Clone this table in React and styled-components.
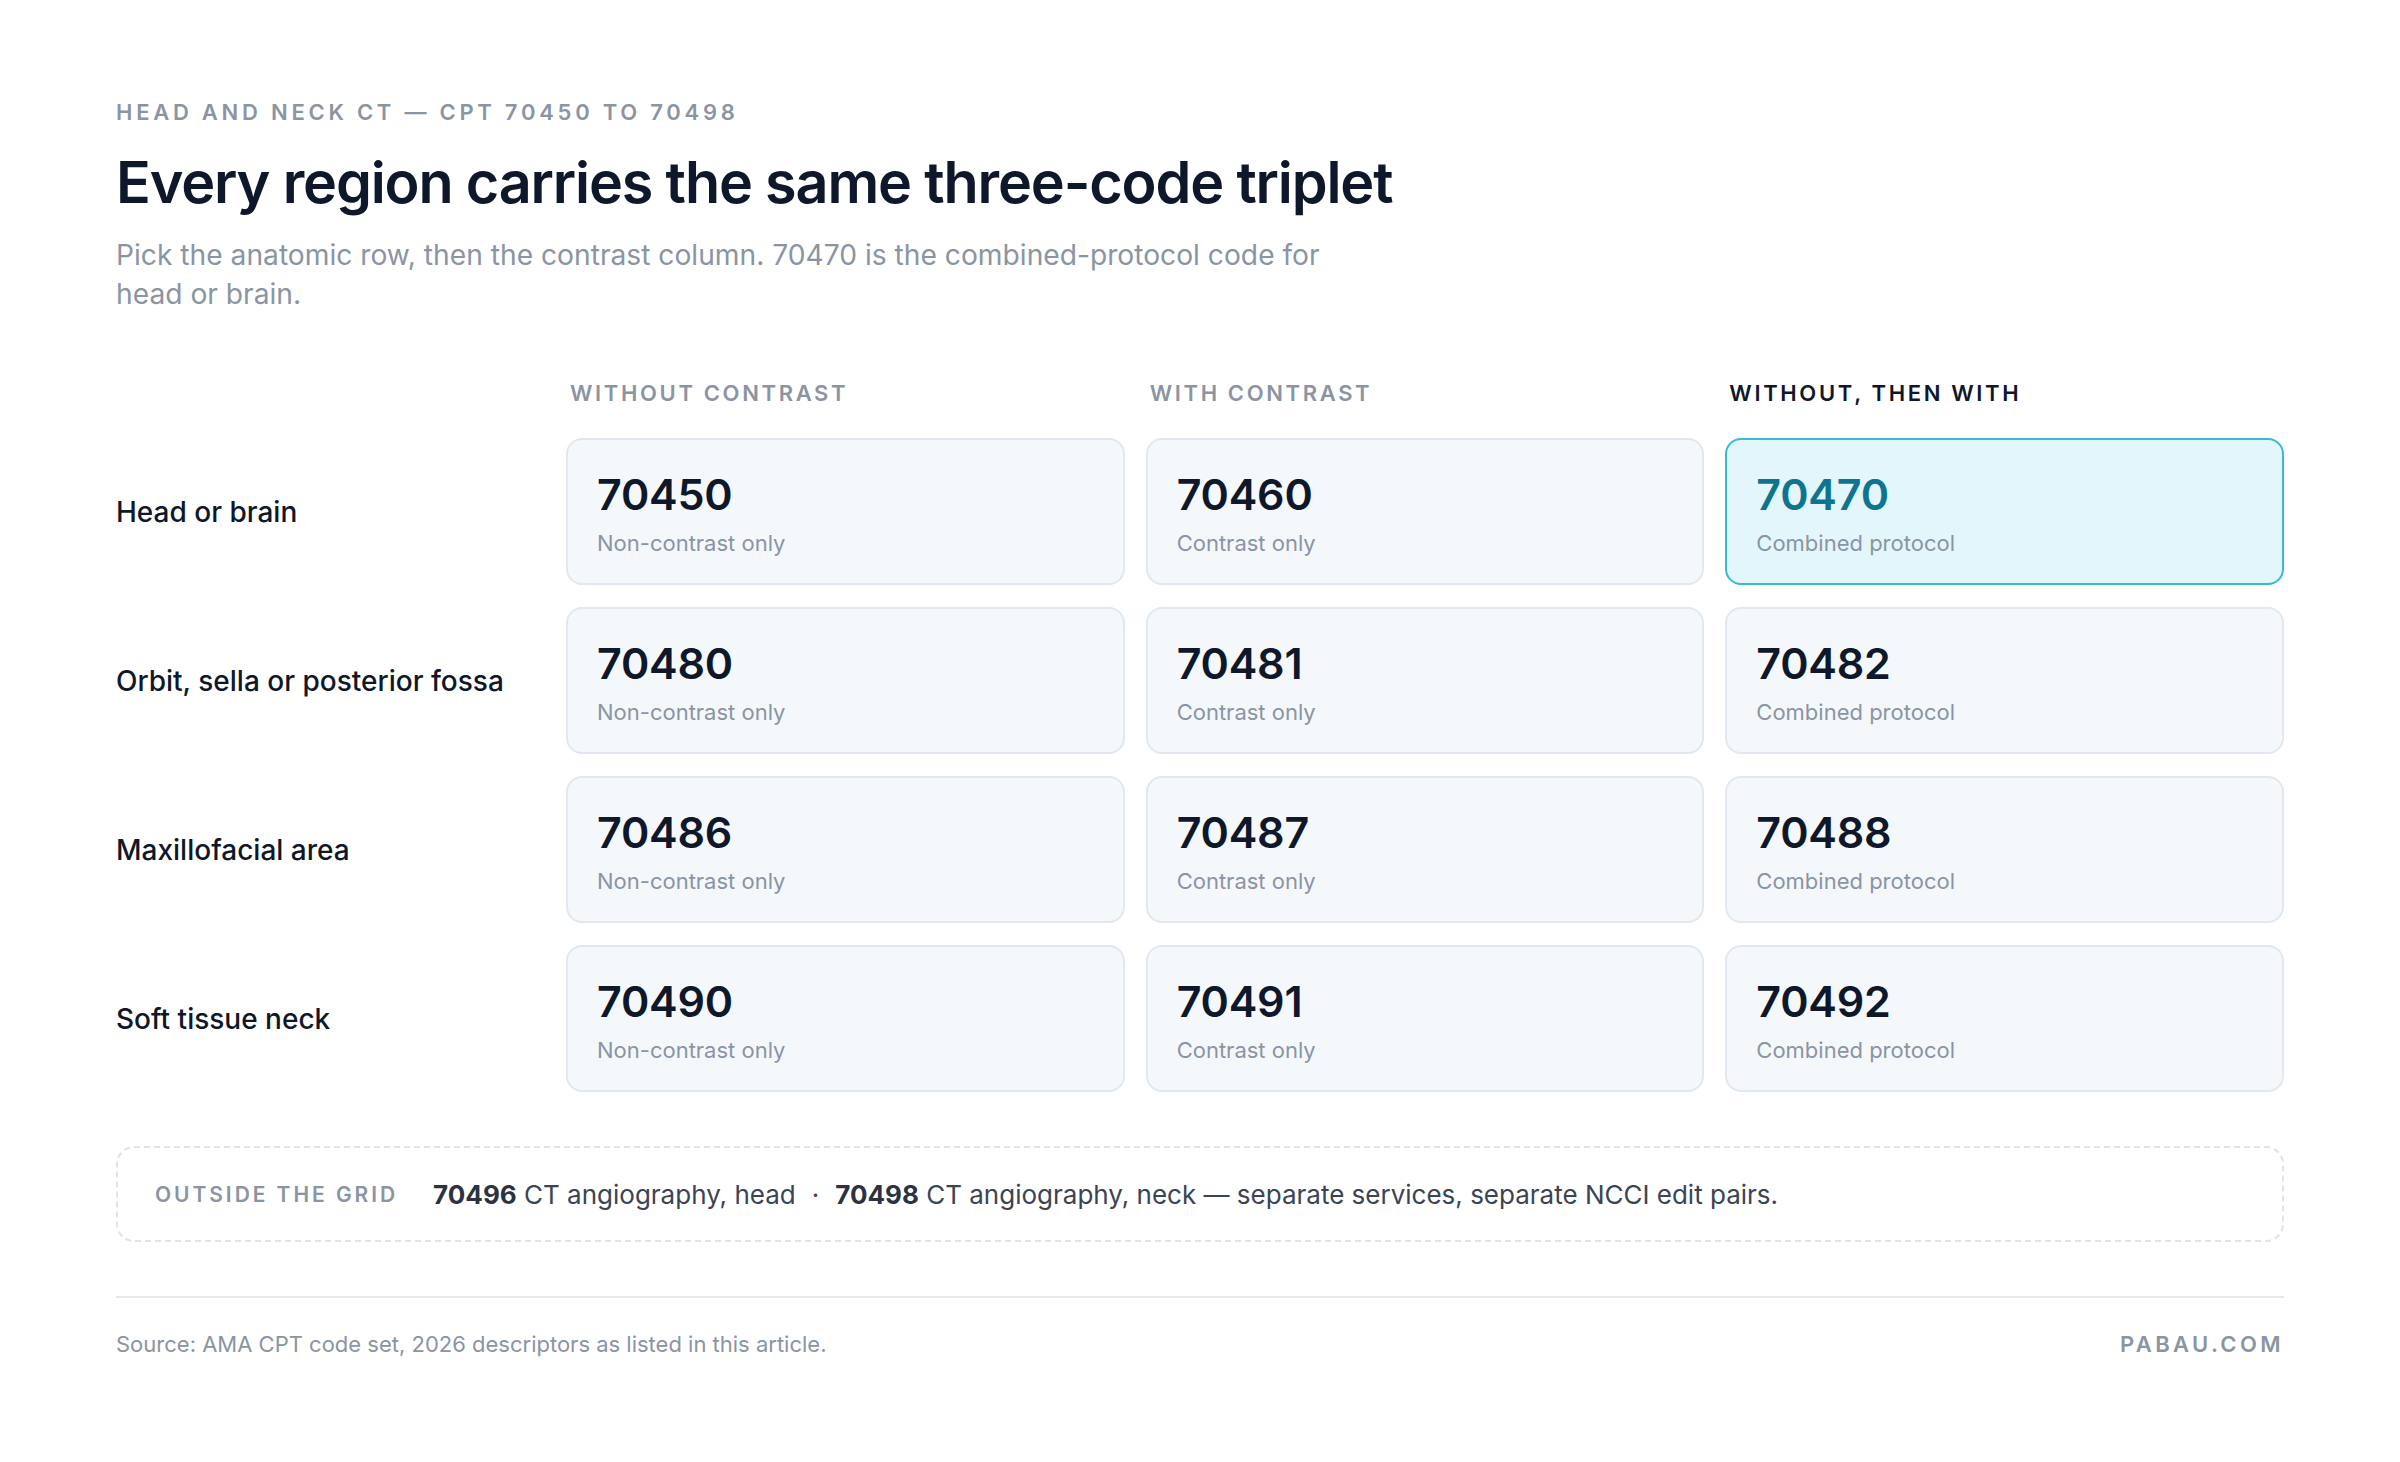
import React from 'react';
import styled, { createGlobalStyle } from 'styled-components';

const GlobalStyle = createGlobalStyle`
  html, body {
    margin: 0;
    padding: 0;
    background: #ffffff;
  }
  body {
    font-family: Inter, "Noto Sans", sans-serif;
    color: #0f172a;
  }
`;

const Page = styled.main`
  width: 2400px;
  min-height: 1462px;
  box-sizing: border-box;
  padding: 99px 116px 60px;
`;

const Eyebrow = styled.div`
  font-size: 22px;
  line-height: 26px;
  font-weight: 600;
  letter-spacing: 0.17em;
  color: #8b94a3;
  text-transform: uppercase;
`;

const Title = styled.h1`
  margin: 24px 0 0;
  font-size: 57.5px;
  line-height: 66px;
  font-weight: 600;
  letter-spacing: -0.02em;
  color: #0f172a;
`;

const Lead = styled.p`
  margin: 21px 0 0;
  max-width: 1250px;
  font-size: 28.2px;
  line-height: 39px;
  font-weight: 400;
  color: #8b94a3;
`;

const Grid = styled.section`
  margin-top: 66px;
  display: grid;
  grid-template-columns: 429px repeat(3, 1fr);
  column-gap: 21px;
  row-gap: 22px;
`;

const ColHead = styled.div`
  padding-left: 4px;
  margin-bottom: 10px;
  font-size: 22px;
  line-height: 26px;
  font-weight: 600;
  letter-spacing: 0.12em;
  text-transform: uppercase;
  color: ${({ $active }) => ($active ? '#0f172a' : '#8b94a3')};
`;

const RowLabel = styled.div`
  display: flex;
  align-items: center;
  font-size: 28px;
  font-weight: 500;
  color: #0f172a;
`;

const Card = styled.div`
  box-sizing: border-box;
  height: 147px;
  padding: 28px 29px 0;
  border-radius: 16px;
  border: 2px solid ${({ $active }) => ($active ? '#3bb9d1' : '#e2e8f0')};
  background: ${({ $active }) => ($active ? '#e3f6fb' : '#f4f8fb')};
`;

const Code = styled.div`
  font-size: 43px;
  line-height: 52px;
  font-weight: 600;
  letter-spacing: -0.005em;
  color: ${({ $active }) => ($active ? '#0e7490' : '#0f172a')};
`;

const Desc = styled.div`
  margin-top: 8px;
  font-size: 22px;
  line-height: 30px;
  color: #8b94a3;
`;

const Aside = styled.div`
  margin-top: 54px;
  height: 96px;
  box-sizing: border-box;
  display: flex;
  align-items: center;
  padding: 0 37px;
  border: 2px dashed #dfe4ea;
  border-radius: 18px;
  font-size: 26px;
  color: #3b4454;
`;

const AsideTag = styled.span`
  margin-right: 35px;
  font-size: 21px;
  font-weight: 600;
  letter-spacing: 0.14em;
  text-transform: uppercase;
  color: #8b94a3;
`;

const Strong = styled.b`
  font-weight: 700;
  color: #2b3242;
`;

const Dot = styled.span`
  margin: 0 16px;
  color: #3b4454;
`;

const Rule = styled.hr`
  margin: 54px 0 0;
  border: 0;
  border-top: 2px solid #e6e8ee;
`;

const Footer = styled.footer`
  margin-top: 33px;
  display: flex;
  justify-content: space-between;
  align-items: center;
`;

const Source = styled.span`
  font-size: 22px;
  color: #8b94a3;
`;

const Brand = styled.span`
  font-size: 22px;
  font-weight: 600;
  letter-spacing: 0.155em;
  color: #8b94a3;
`;

const columns = ['Without contrast', 'With contrast', 'Without, then with'];
const descs = ['Non-contrast only', 'Contrast only', 'Combined protocol'];

const rows = [
  { label: 'Head or brain', codes: ['70450', '70460', '70470'] },
  { label: 'Orbit, sella or posterior fossa', codes: ['70480', '70481', '70482'] },
  { label: 'Maxillofacial area', codes: ['70486', '70487', '70488'] },
  { label: 'Soft tissue neck', codes: ['70490', '70491', '70492'] },
];

const App = () => {
  return (
    <Page>
      <GlobalStyle />
      <Eyebrow>Head and neck CT — CPT 70450 to 70498</Eyebrow>
      <Title>Every region carries the same three-code triplet</Title>
      <Lead>
        Pick the anatomic row, then the contrast column. 70470 is the combined-protocol code for
        head or brain.
      </Lead>

      <Grid>
        <div />
        {columns.map((c, i) => (
          <ColHead key={c} $active={i === 2}>{c}</ColHead>
        ))}
        {rows.map((row, r) => (
          <React.Fragment key={row.label}>
            <RowLabel>{row.label}</RowLabel>
            {row.codes.map((code, i) => {
              const active = r === 0 && i === 2;
              return (
                <Card key={code} $active={active}>
                  <Code $active={active}>{code}</Code>
                  <Desc>{descs[i]}</Desc>
                </Card>
              );
            })}
          </React.Fragment>
        ))}
      </Grid>

      <Aside>
        <AsideTag>Outside the grid</AsideTag>
        <span>
          <Strong>70496</Strong> CT angiography, head
          <Dot>·</Dot>
          <Strong>70498</Strong> CT angiography, neck — separate services, separate NCCI edit pairs.
        </span>
      </Aside>

      <Rule />
      <Footer>
        <Source>Source: AMA CPT code set, 2026 descriptors as listed in this article.</Source>
        <Brand>PABAU.COM</Brand>
      </Footer>
    </Page>
  );
};

export default App;
